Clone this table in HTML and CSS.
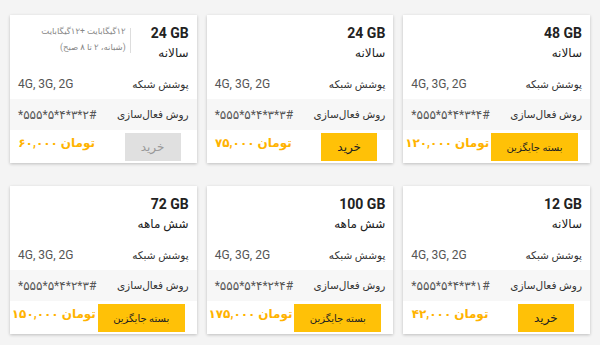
FILE: index.html
```html
<!doctype html>
<html lang="fa" dir="rtl">
<head>
    <meta charset="UTF-8">
    <title>بسته‌های اینترنت</title>
    <link rel="stylesheet" href="styles.css">
</head>
<body>
<div class="packages">

    <div class="card">
        <div class="card-head">
            <div class="head-title">
                <div class="volume"><bdi dir="ltr">48 GB</bdi></div>
                <div class="period">سالانه</div>
            </div>
        </div>
        <div class="row"><span class="label">پوشش شبکه</span><span class="value">4G, 3G, 2G</span></div>
        <div class="row shaded"><span class="label">روش فعال‌سازی</span><span class="value" dir="ltr">*۵۵۵*۵*۴*۳*۴#</span></div>
        <div class="card-foot">
            <button class="buy-btn wide">بسته جایگزین</button>
            <div class="price">تومان ۱۲۰,۰۰۰</div>
        </div>
    </div>

    <div class="card">
        <div class="card-head">
            <div class="head-title">
                <div class="volume"><bdi dir="ltr">24 GB</bdi></div>
                <div class="period">سالانه</div>
            </div>
        </div>
        <div class="row"><span class="label">پوشش شبکه</span><span class="value">4G, 3G, 2G</span></div>
        <div class="row shaded"><span class="label">روش فعال‌سازی</span><span class="value" dir="ltr">*۵۵۵*۵*۴*۳*۳#</span></div>
        <div class="card-foot">
            <button class="buy-btn">خرید</button>
            <div class="price">تومان ۷۵,۰۰۰</div>
        </div>
    </div>

    <div class="card">
        <div class="card-head">
            <div class="head-title">
                <div class="volume"><bdi dir="ltr">24 GB</bdi></div>
                <div class="period">سالانه</div>
            </div>
            <span class="divider"></span>
            <div class="note">۱۲گیگابایت +۱۲گیگابایت<br>(شبانه، ۲ تا ۸ صبح)</div>
        </div>
        <div class="row"><span class="label">پوشش شبکه</span><span class="value">4G, 3G, 2G</span></div>
        <div class="row shaded"><span class="label">روش فعال‌سازی</span><span class="value" dir="ltr">*۵۵۵*۵*۴*۳*۲#</span></div>
        <div class="card-foot">
            <button class="buy-btn disabled">خرید</button>
            <div class="price">تومان ۶۰,۰۰۰</div>
        </div>
    </div>

    <div class="card">
        <div class="card-head">
            <div class="head-title">
                <div class="volume"><bdi dir="ltr">12 GB</bdi></div>
                <div class="period">سالانه</div>
            </div>
        </div>
        <div class="row"><span class="label">پوشش شبکه</span><span class="value">4G, 3G, 2G</span></div>
        <div class="row shaded"><span class="label">روش فعال‌سازی</span><span class="value" dir="ltr">*۵۵۵*۵*۴*۳*۱#</span></div>
        <div class="card-foot">
            <button class="buy-btn">خرید</button>
            <div class="price">تومان ۴۲,۰۰۰</div>
        </div>
    </div>

    <div class="card">
        <div class="card-head">
            <div class="head-title">
                <div class="volume"><bdi dir="ltr">100 GB</bdi></div>
                <div class="period">شش ماهه</div>
            </div>
        </div>
        <div class="row"><span class="label">پوشش شبکه</span><span class="value">4G, 3G, 2G</span></div>
        <div class="row shaded"><span class="label">روش فعال‌سازی</span><span class="value" dir="ltr">*۵۵۵*۵*۴*۲*۴#</span></div>
        <div class="card-foot">
            <button class="buy-btn wide">بسته جایگزین</button>
            <div class="price">تومان ۱۷۵,۰۰۰</div>
        </div>
    </div>

    <div class="card">
        <div class="card-head">
            <div class="head-title">
                <div class="volume"><bdi dir="ltr">72 GB</bdi></div>
                <div class="period">شش ماهه</div>
            </div>
        </div>
        <div class="row"><span class="label">پوشش شبکه</span><span class="value">4G, 3G, 2G</span></div>
        <div class="row shaded"><span class="label">روش فعال‌سازی</span><span class="value" dir="ltr">*۵۵۵*۵*۴*۲*۳#</span></div>
        <div class="card-foot">
            <button class="buy-btn wide">بسته جایگزین</button>
            <div class="price">تومان ۱۵۰,۰۰۰</div>
        </div>
    </div>

</div>
</body>
</html>
```

FILE: styles.css
```css
body {
    margin: 0;
    font-family: Roboto, "DejaVu Sans", sans-serif;
    direction: rtl;
    background-color: #f4f4f4;
    color: #222;
}

.packages {
    display: grid;
    grid-template-columns: repeat(3, 1fr);
    column-gap: 10px;
    row-gap: 23px;
    padding: 15px 10px;
}

.card {
    background-color: #fff;
    box-shadow: 0 1px 3px rgba(0, 0, 0, 0.22);
    height: 148px;
}

.card-head {
    display: flex;
    align-items: flex-start;
    padding: 8px 8px 6px;
}

.volume {
    font-size: 14px;
    font-weight: bold;
    line-height: 20px;
}

.period {
    font-size: 12px;
    line-height: 20px;
}

.divider {
    width: 1px;
    height: 25px;
    margin: 5px 20px 0 4px;
    background-color: #ddd;
}

.note {
    font-size: 8.5px;
    line-height: 16px;
    color: #888;
}

.row {
    display: flex;
    justify-content: space-between;
    align-items: center;
    height: 30px;
    padding: 0 8px;
    font-size: 10.5px;
}

.row.shaded {
    height: 31px;
    background-color: #f7f7f7;
}

.label {
    color: #333;
}

.value {
    color: #555;
    font-size: 12px;
}

.card-foot {
    display: grid;
    grid-template-columns: 1fr 1fr;
    justify-items: center;
    align-items: start;
    padding-top: 3px;
}

.buy-btn {
    width: 56px;
    height: 28px;
    margin-left: 5px;
    border: none;
    background-color: #ffc107;
    color: #222;
    font-family: inherit;
    font-size: 12px;
    padding: 0;
}

.buy-btn.wide {
    width: 87px;
    font-size: 10px;
    margin-left: 0;
    margin-right: 12px;
}

.buy-btn.disabled {
    background-color: #e0e0e0;
    color: #999;
}

.price {
    color: #ffb300;
    font-size: 12px;
    font-weight: bold;
    line-height: 20px;
    white-space: nowrap;
}
```
